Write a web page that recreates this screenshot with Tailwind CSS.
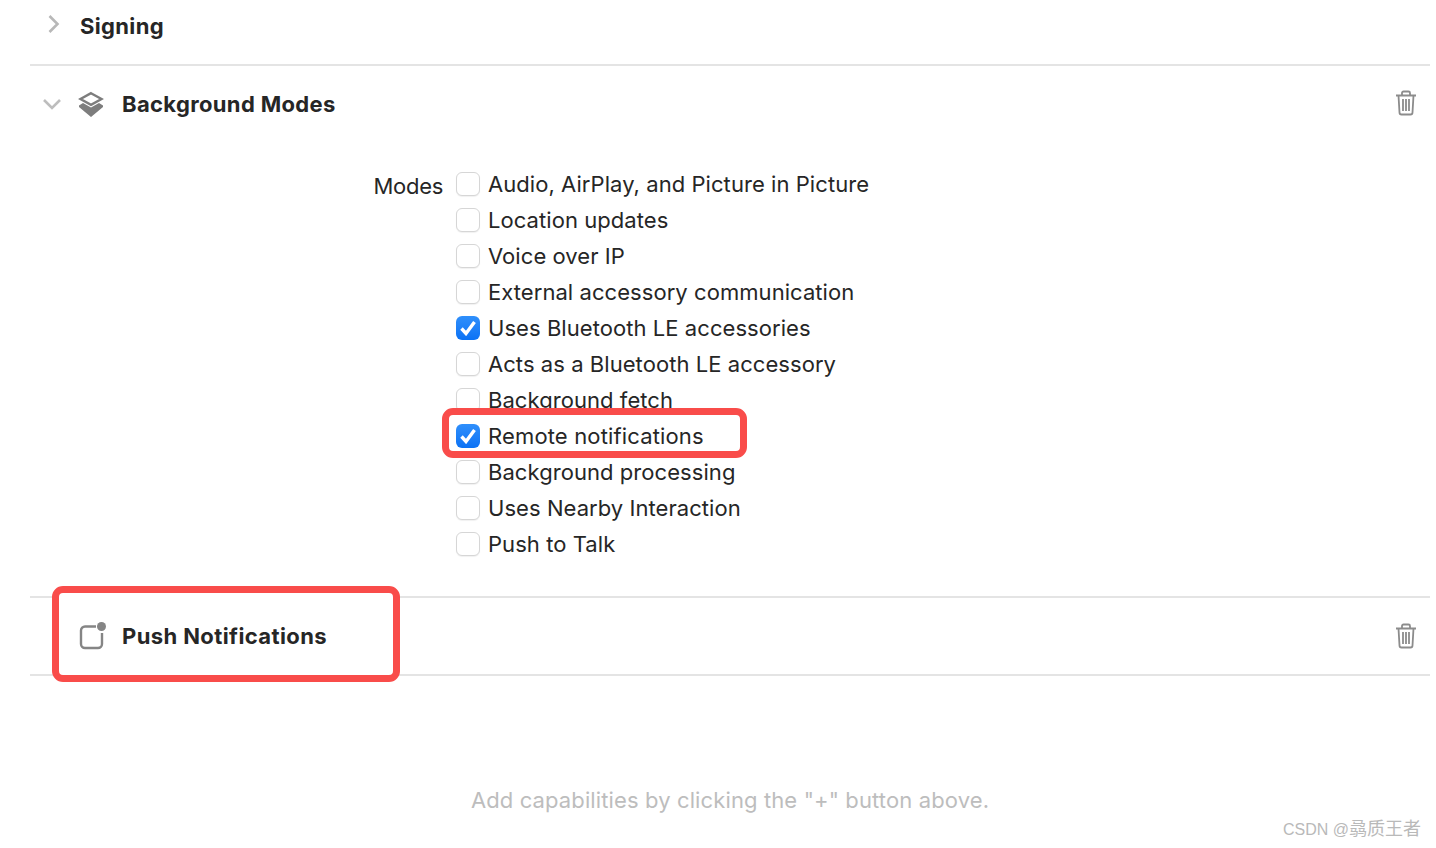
<!DOCTYPE html>
<html>
 <head>
  <title>Capabilities</title>
  <script src="https://cdn.jsdelivr.net/npm/@tailwindcss/browser@4"></script>
 </head>
 <body class="relative w-[1436px] h-[848px] overflow-hidden bg-white font-['Inter','Liberation_Sans',sans-serif] text-[#262626]">
  <div class="mx-[30px] w-[1400px]">
   <!-- Signing -->
   <div class="h-[66px] border-b-2 border-[#e4e4e4] flex items-start">
    <svg class="ml-[17px] mt-[14px]" width="14" height="20" viewBox="0 0 14 20" fill="none" stroke="#b8b8b8" stroke-width="2.6"><path d="M2.5 2l8 8-8 8"/></svg>
    <span class="ml-[19px] mt-[12px] text-[22px] leading-[28px] font-bold tracking-[0.35px]">Signing</span>
   </div>

   <!-- Background Modes -->
   <div class="h-[532px] border-b-2 border-[#e4e4e4]">
    <div class="h-[76px] flex items-center pb-[1px]">
     <svg class="ml-[13px]" width="18" height="12" viewBox="0 0 18 12" fill="none" stroke="#bdbdbd" stroke-width="2.6"><path d="M1 2l8 8 8-8"/></svg>
     <svg class="ml-[17px]" width="26" height="26" viewBox="0 0 26 26"><path d="M13 2.200L23.500 8 13 13.800 2.500 8z" fill="none" stroke="#7d7d7d" stroke-width="2.4"/><path d="M1 14.500L5 12l8 4.500L21 12l4 2.500V16L13 26 1 16z" fill="#7d7d7d"/></svg>
     <span class="ml-[18px] text-[22px] leading-[28px] font-bold tracking-[0.35px]">Background Modes</span>
     <svg class="ml-auto mr-[12px] mb-[1px]" width="24" height="26" viewBox="0 0 24 26" fill="none" stroke="#8c8c8c" stroke-width="1.8"><path d="M2 5.500h20M8 5.500V3a1.500 1.500 0 0 1 1.500-1.500h5A1.500 1.500 0 0 1 16 3v2.500M4.500 5.500l1 17a2 2 0 0 0 2 2h9a2 2 0 0 0 2-2l1-17M9 9v12M12 9v12M15 9v12"/></svg>
    </div>
    <div class="flex pt-[24px]">
     <span class="w-[413px] text-right text-[22px] leading-[36px] pt-[2px] tracking-[-0.3px]">Modes</span>
     <ul class="ml-[13px] flex flex-col text-[22px] leading-[36px] tracking-[0.06px]">
      <li class="h-[36px] flex items-center gap-[8px]"><span class="w-[24px] h-[24px] rounded-[6px] border-[1.5px] border-[#d6d6d6] bg-white shadow-[0_1px_1px_rgba(0,0,0,0.06)]"></span>Audio, AirPlay, and Picture in Picture</li>
      <li class="h-[36px] flex items-center gap-[8px]"><span class="w-[24px] h-[24px] rounded-[6px] border-[1.5px] border-[#d6d6d6] bg-white shadow-[0_1px_1px_rgba(0,0,0,0.06)]"></span>Location updates</li>
      <li class="h-[36px] flex items-center gap-[8px]"><span class="w-[24px] h-[24px] rounded-[6px] border-[1.5px] border-[#d6d6d6] bg-white shadow-[0_1px_1px_rgba(0,0,0,0.06)]"></span>Voice over IP</li>
      <li class="h-[36px] flex items-center gap-[8px]"><span class="w-[24px] h-[24px] rounded-[6px] border-[1.5px] border-[#d6d6d6] bg-white shadow-[0_1px_1px_rgba(0,0,0,0.06)]"></span>External accessory communication</li>
      <li class="h-[36px] flex items-center gap-[8px]"><span class="w-[24px] h-[24px] rounded-[6px] bg-gradient-to-b from-[#2f8ffb] to-[#0a72f5] flex items-center justify-center"><svg width="18" height="16" viewBox="0 0 18 16" fill="none" stroke="#fff" stroke-width="3.4"><path d="M2.500 8.500l4.500 5 8.500-11.500"/></svg></span>Uses Bluetooth LE accessories</li>
      <li class="h-[36px] flex items-center gap-[8px]"><span class="w-[24px] h-[24px] rounded-[6px] border-[1.5px] border-[#d6d6d6] bg-white shadow-[0_1px_1px_rgba(0,0,0,0.06)]"></span>Acts as a Bluetooth LE accessory</li>
      <li class="h-[36px] flex items-center gap-[8px]"><span class="w-[24px] h-[24px] rounded-[6px] border-[1.5px] border-[#d6d6d6] bg-white shadow-[0_1px_1px_rgba(0,0,0,0.06)]"></span>Background fetch</li>
      <li class="relative h-[36px] flex items-center gap-[8px]">
       <div class="absolute left-[-14px] top-[-10px] w-[305px] h-[50px] rounded-[11px] border-[7px] border-[#f94c4a] bg-white"></div>
       <span class="relative w-[24px] h-[24px] rounded-[6px] bg-gradient-to-b from-[#2f8ffb] to-[#0a72f5] flex items-center justify-center"><svg width="18" height="16" viewBox="0 0 18 16" fill="none" stroke="#fff" stroke-width="3.4"><path d="M2.500 8.500l4.500 5 8.500-11.500"/></svg></span>
       <span class="relative tracking-[0.15px]">Remote notifications</span>
      </li>
      <li class="h-[36px] flex items-center gap-[8px]"><span class="w-[24px] h-[24px] rounded-[6px] border-[1.5px] border-[#d6d6d6] bg-white shadow-[0_1px_1px_rgba(0,0,0,0.06)]"></span>Background processing</li>
      <li class="h-[36px] flex items-center gap-[8px]"><span class="w-[24px] h-[24px] rounded-[6px] border-[1.5px] border-[#d6d6d6] bg-white shadow-[0_1px_1px_rgba(0,0,0,0.06)]"></span>Uses Nearby Interaction</li>
      <li class="h-[36px] flex items-center gap-[8px]"><span class="w-[24px] h-[24px] rounded-[6px] border-[1.5px] border-[#d6d6d6] bg-white shadow-[0_1px_1px_rgba(0,0,0,0.06)]"></span>Push to Talk</li>
     </ul>
    </div>
   </div>

   <!-- Push Notifications -->
   <div class="relative h-[78px] border-b-2 border-[#e4e4e4] flex items-center">
    <div class="absolute left-[22px] top-[-12px] w-[348px] h-[96px] rounded-[11px] border-[7px] border-[#f94c4a] bg-white"></div>
    <svg class="relative ml-[49px]" width="28" height="28" viewBox="0 0 28 28" fill="none"><path d="M17 4.500H6a4 4 0 0 0-4 4V22a4 4 0 0 0 4 4h13a4 4 0 0 0 4-4V11" stroke="#858585" stroke-width="2.4"/><circle cx="22.500" cy="4.500" r="4.500" fill="#858585"/></svg>
    <span class="relative ml-[15px] text-[22px] leading-[28px] font-bold tracking-[0.4px]">Push Notifications</span>
    <svg class="relative ml-auto mr-[12px] mb-[1px]" width="24" height="26" viewBox="0 0 24 26" fill="none" stroke="#8c8c8c" stroke-width="1.8"><path d="M2 5.500h20M8 5.500V3a1.500 1.500 0 0 1 1.500-1.500h5A1.500 1.500 0 0 1 16 3v2.500M4.500 5.500l1 17a2 2 0 0 0 2 2h9a2 2 0 0 0 2-2l1-17M9 9v12M12 9v12M15 9v12"/></svg>
   </div>

   <p class="mt-[109px] text-center text-[22px] leading-[30px] text-[#bdbdbd] tracking-[0.12px]">Add capabilities by clicking the "+" button above.</p>
  </div>

  <div class="absolute right-[15px] bottom-[6px] text-[18px] leading-[24px] text-[#b9b9b9] font-['Liberation_Sans','Noto_Sans_CJK_SC',sans-serif]"><span class="text-[16px]">CSDN @</span>骉质王者</div>
 </body>
</html>
